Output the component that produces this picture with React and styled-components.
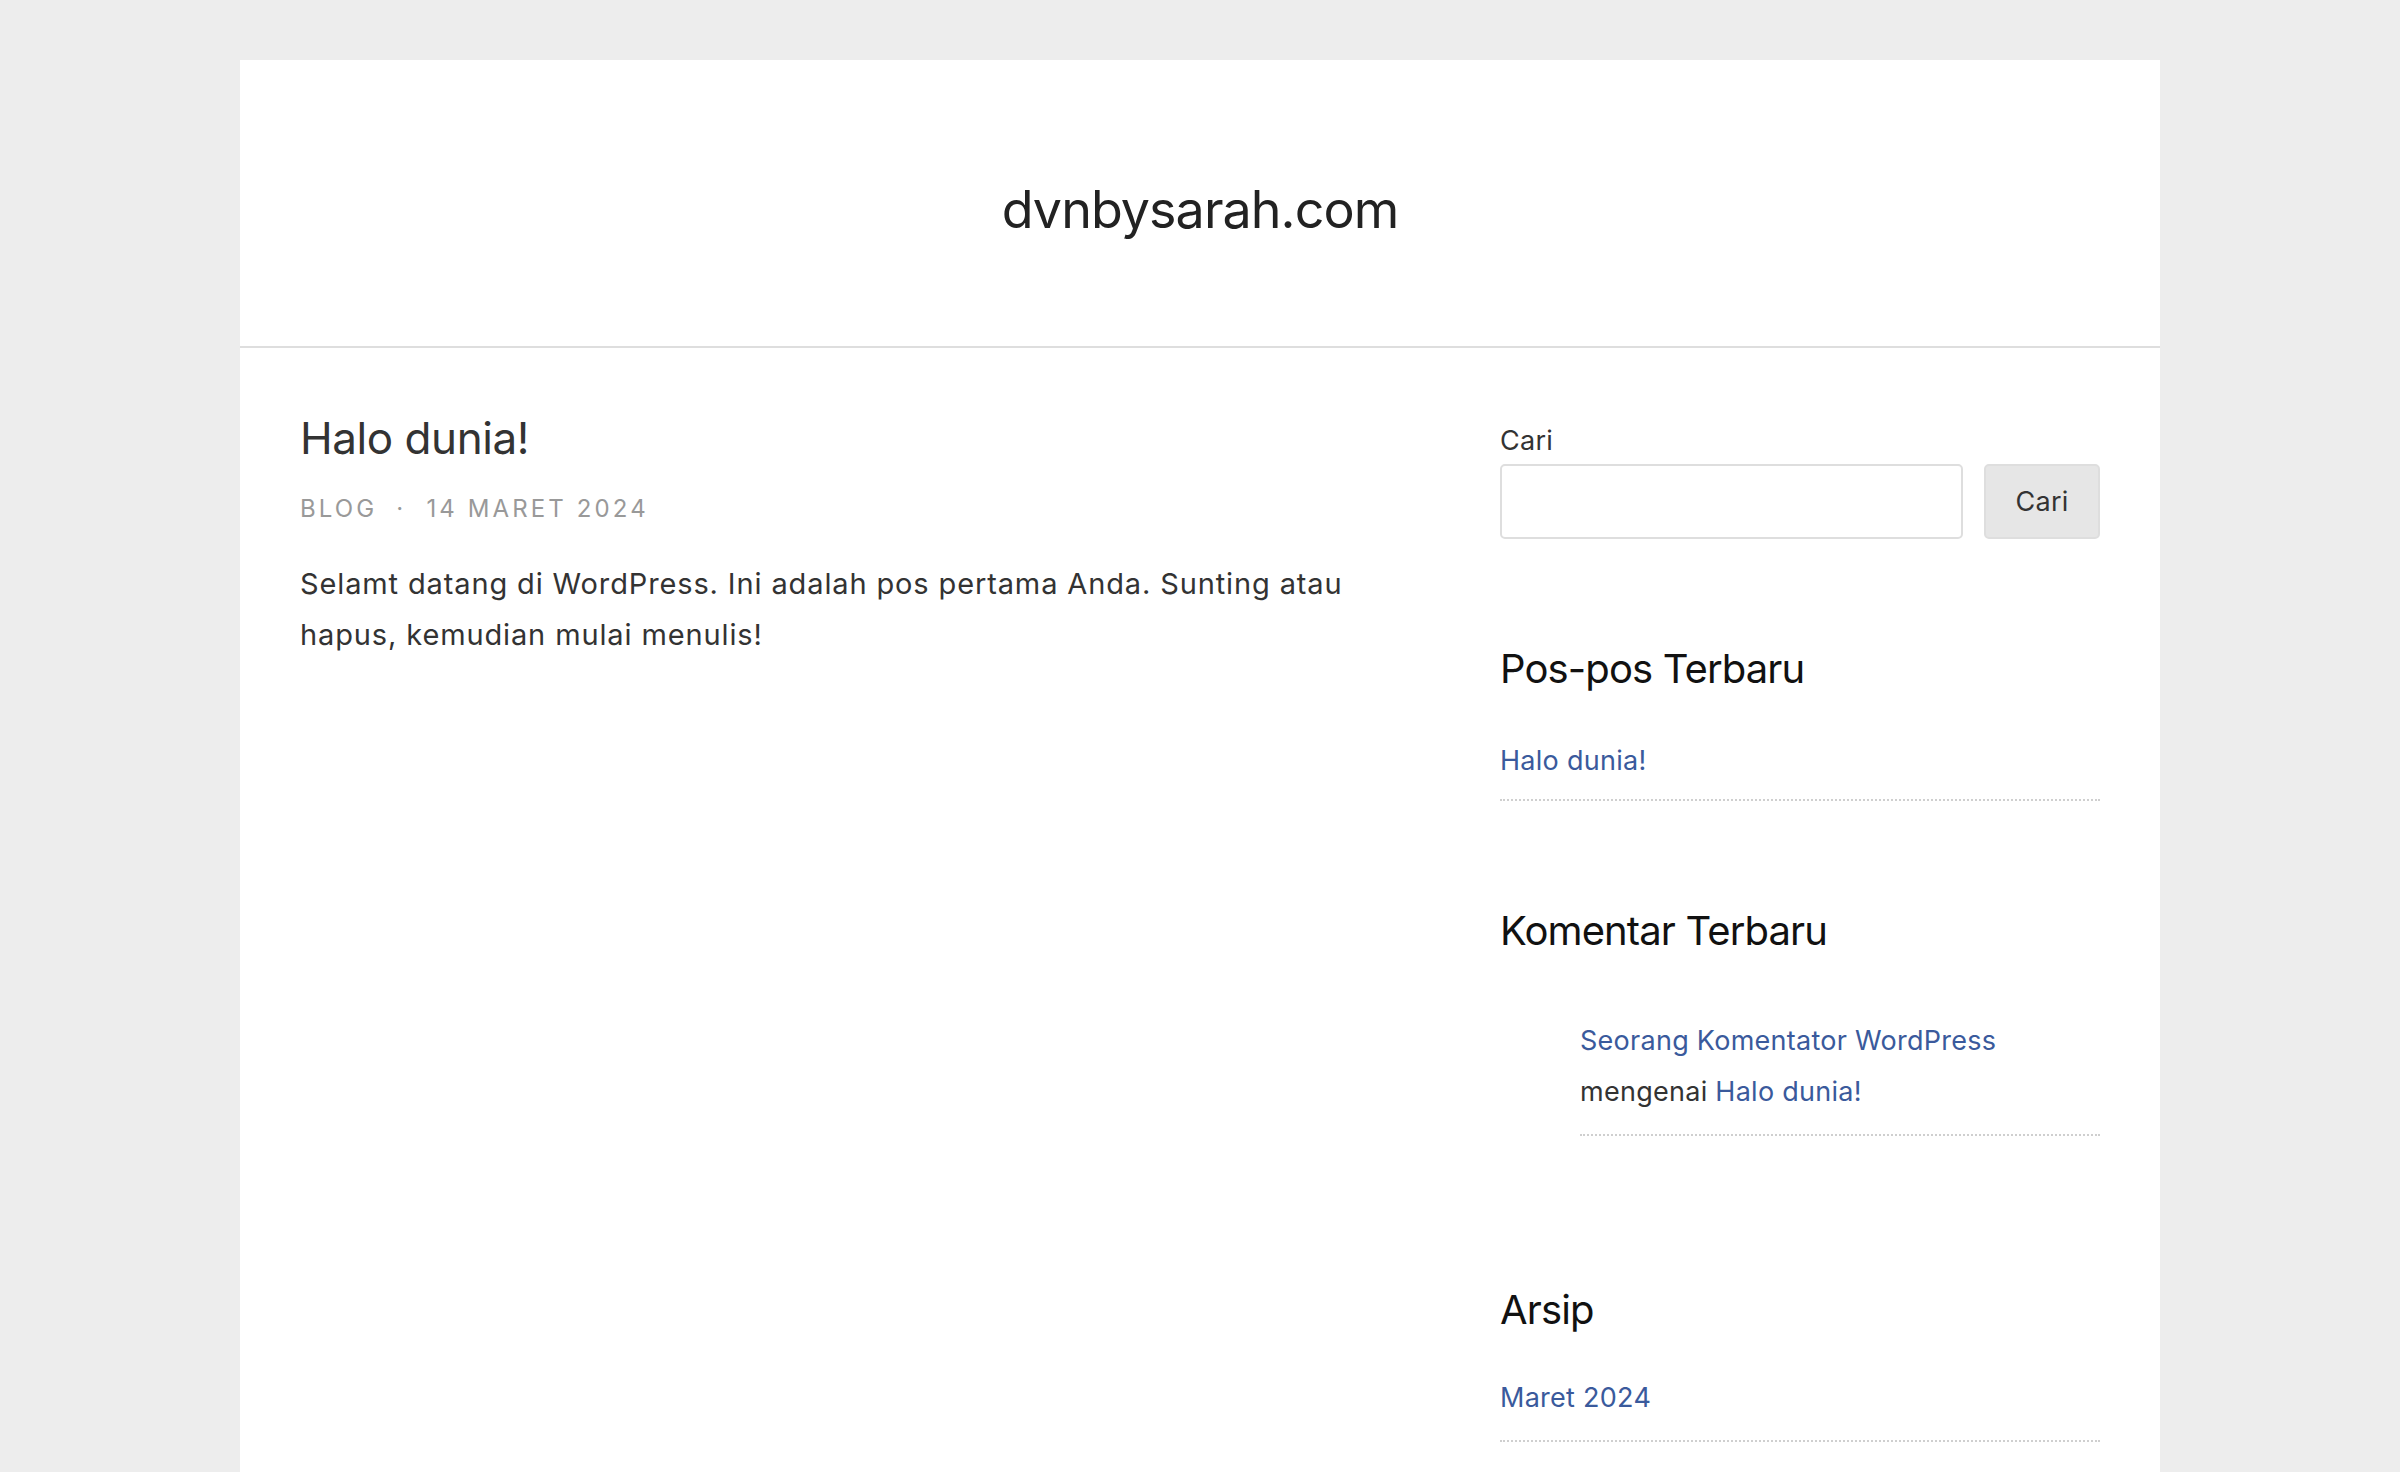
import React from "react";
import styled, { createGlobalStyle } from "styled-components";

const GlobalStyle = createGlobalStyle`
    body {
        margin: 0;
        background-color: #ededed;
        font-family: Inter, "Noto Sans", "Liberation Sans", sans-serif;
        color: #333;
    }
`;

const Page = styled.div`
    display: flex;
    justify-content: center;
    padding-top: 60px;
`;

const Site = styled.div`
    width: 1920px;
    min-height: 1500px;
    background-color: #fff;
`;

const Header = styled.header`
    padding: 119px 0 105px;
    border-bottom: 2px solid #dedede;
    text-align: center;
`;

const SiteTitle = styled.h1`
    margin: 0;
    font-size: 52px;
    font-weight: 400;
    line-height: 1.2;
    letter-spacing: -0.018em;
    color: #222;
`;

const Content = styled.div`
    display: grid;
    grid-template-columns: 1fr 600px;
    column-gap: 100px;
    padding: 64px 60px 60px;
`;

const Article = styled.article``;

const PostTitle = styled.h2`
    margin: 0;
    font-size: 44px;
    font-weight: 400;
    line-height: 1.2;
    letter-spacing: -0.01em;
    color: #333;
`;

const Meta = styled.div`
    margin-top: 26px;
    font-size: 24px;
    line-height: 36px;
    letter-spacing: 0.13em;
    text-transform: uppercase;
    color: #999;
`;

const Sep = styled.span`
    margin: 0 20px 0 19px;
`;

const PostBody = styled.p`
    margin: 31px 0 0;
    max-width: 1100px;
    font-size: 29px;
    line-height: 51px;
    letter-spacing: 0.03em;
    color: #333;
`;

const Sidebar = styled.aside`
    padding-top: 9px;
`;

const SearchLabel = styled.label`
    display: block;
    font-size: 27px;
    line-height: 39px;
    letter-spacing: 0.01em;
    color: #333;
`;

const SearchRow = styled.div`
    display: flex;
    gap: 21px;
    margin-top: 4px;
`;

const SearchInput = styled.input`
    flex: 1;
    height: 75px;
    box-sizing: border-box;
    border: 2px solid #dedede;
    border-radius: 5px;
    background: #fff;
    outline: none;
`;

const SearchButton = styled.button`
    width: 116px;
    height: 75px;
    box-sizing: border-box;
    border: 2px solid #dedede;
    border-radius: 5px;
    background-color: #e6e6e6;
    font-family: inherit;
    font-size: 27px;
    letter-spacing: 0.01em;
    color: #333;
`;

const Widget = styled.section`
    margin-top: ${({ $gap }) => $gap}px;
`;

const WidgetTitle = styled.h2`
    margin: 0;
    font-size: 40px;
    font-weight: 400;
    line-height: 48px;
    letter-spacing: -0.022em;
    color: #111;
`;

const List = styled.ul`
    list-style: none;
    margin: ${({ $top }) => $top}px 0 0;
    padding: 0 0 0 ${({ $indent }) => $indent || 0}px;
`;

const Item = styled.li`
    font-size: 27px;
    line-height: 51px;
    letter-spacing: 0.01em;
    padding-bottom: ${({ $pad }) => $pad}px;
    border-bottom: 2px dotted #cfcfcf;
    color: #333;
`;

const Link = styled.a`
    color: #3a5a9c;
    text-decoration: none;
`;

export default function App() {
    return (
        <>
            <GlobalStyle />
            <Page>
                <Site>
                    <Header>
                        <SiteTitle>dvnbysarah.com</SiteTitle>
                    </Header>
                    <Content>
                        <Article>
                            <PostTitle>Halo dunia!</PostTitle>
                            <Meta>
                                Blog<Sep>·</Sep>14 Maret 2024
                            </Meta>
                            <PostBody>
                                Selamt datang di WordPress. Ini adalah pos pertama Anda. Sunting atau hapus,
                                kemudian mulai menulis!
                            </PostBody>
                        </Article>
                        <Sidebar>
                            <SearchLabel htmlFor="s">Cari</SearchLabel>
                            <SearchRow>
                                <SearchInput id="s" type="text" />
                                <SearchButton>Cari</SearchButton>
                            </SearchRow>

                            <Widget $gap={106}>
                                <WidgetTitle>Pos-pos Terbaru</WidgetTitle>
                                <List $top={42}>
                                    <Item $pad={13}>
                                        <Link href="#">Halo dunia!</Link>
                                    </Item>
                                </List>
                            </Widget>

                            <Widget $gap={106}>
                                <WidgetTitle>Komentar Terbaru</WidgetTitle>
                                <List $top={60} $indent={80}>
                                    <Item $pad={17}>
                                        <Link href="#">Seorang Komentator WordPress</Link>
                                        <br />
                                        mengenai <Link href="#">Halo dunia!</Link>
                                    </Item>
                                </List>
                            </Widget>

                            <Widget $gap={150}>
                                <WidgetTitle>Arsip</WidgetTitle>
                                <List $top={38}>
                                    <Item $pad={17}>
                                        <Link href="#">Maret 2024</Link>
                                    </Item>
                                </List>
                            </Widget>
                        </Sidebar>
                    </Content>
                </Site>
            </Page>
        </>
    );
}
